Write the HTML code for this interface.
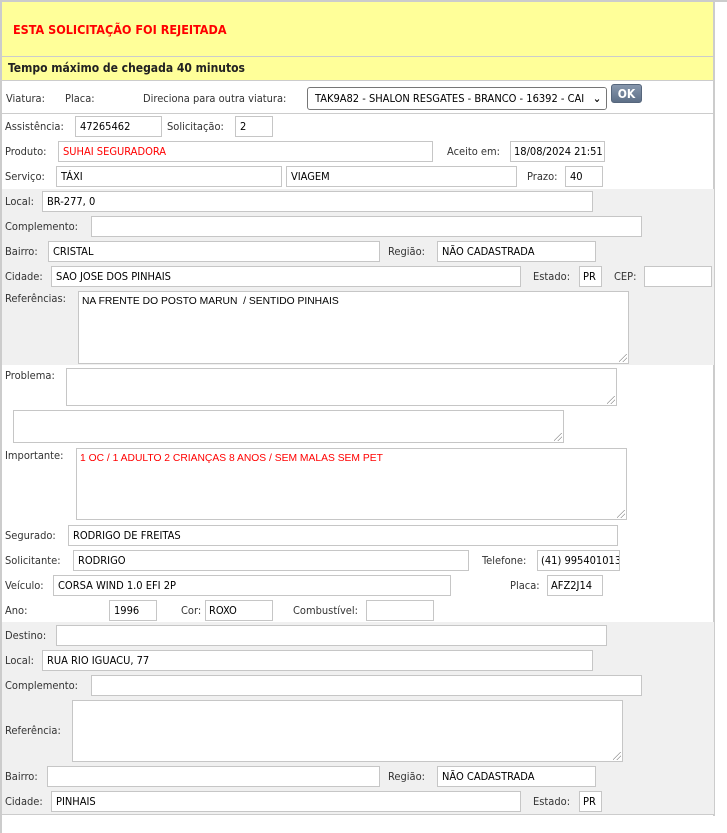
<!DOCTYPE html>
<html><head><meta charset="utf-8"><style>
*{box-sizing:border-box;margin:0;padding:0}
body{width:727px;height:833px;background:#fff;position:relative;overflow:hidden;font-family:"DejaVu Sans Condensed","Liberation Sans",sans-serif;font-size:11px;color:#333}
div,span{position:absolute}
.l{white-space:nowrap;line-height:13px;transform:translateY(-1px)}
.i{background:#fff;border:1px solid #c6c6c6;height:21px;line-height:19px;padding-left:4px;color:#000;white-space:nowrap;overflow:hidden}
.t{background:#fff;border:1px solid #c6c6c6;padding:4px 3px;color:#000;font-family:"Liberation Sans",sans-serif;font-size:10.3px;white-space:nowrap;overflow:hidden}
.t::after{content:"";position:absolute;right:1px;bottom:1px;width:8px;height:8px;background:linear-gradient(135deg,transparent 45%,#999 45%,#999 52%,transparent 52%,transparent 70%,#999 70%,#999 77%,transparent 77%)}
.g{background:#f0f0f0;left:2px;width:712px}
</style></head><body>
<div style="left:0;top:0;width:727px;height:2px;background:#ccc"></div>
<div style="left:0;top:0;width:2px;height:833px;background:#ccc"></div>
<div style="left:713px;top:0;width:2px;height:816px;background:#ccc"></div>
<div style="left:2px;top:2px;width:711px;height:54px;background:#ffff99"></div>
<div style="left:2px;top:56px;width:711px;height:1px;background:#ccc"></div>
<div style="left:2px;top:57px;width:711px;height:23px;background:#ffff99"></div>
<div style="left:2px;top:80px;width:711px;height:1px;background:#ccc"></div>
<div style="left:2px;top:113px;width:711px;height:1px;background:#ccc"></div>
<div class="l" style="left:13px;top:23px;color:#f00;font-weight:bold;font-size:12.5px;line-height:15px">ESTA SOLICITAÇÃO FOI REJEITADA</div>
<div class="l" style="left:8px;top:62px;font-weight:bold;color:#222;font-size:12px;line-height:15px">Tempo máximo de chegada 40 minutos</div>

<div class="l" style="left:6px;top:93px">Viatura:</div>
<div class="l" style="left:65px;top:93px">Placa:</div>
<div class="l" style="left:143px;top:93px">Direciona para outra viatura:</div>
<div style="left:307px;top:87px;width:300px;height:23px;border:1px solid #767676;border-radius:3px;background:#fff;color:#000;line-height:21px;padding-left:7px;white-space:nowrap;overflow:hidden">TAK9A82 - SHALON RESGATES - BRANCO - 16392 - CAI<span style="right:0;top:0;width:18px;height:21px;background:#fff;text-align:center;font-size:11px;font-weight:bold">&#8964;</span></div>
<div style="left:611px;top:84px;width:31px;height:19px;border-radius:3px;background:linear-gradient(#8797ad,#5d6f87);color:#fff;font-weight:bold;font-size:12px;text-align:center;line-height:18px;border:1px solid #56667c">OK</div>

<div class="l" style="left:5px;top:121px">Assistência:</div><div class="i" style="left:75px;top:116px;width:87px">47265462</div>
<div class="l" style="left:167px;top:121px">Solicitação:</div><div class="i" style="left:235px;top:116px;width:38px">2</div>
<div class="l" style="left:5px;top:146px">Produto:</div><div class="i" style="left:58px;top:141px;width:375px;color:#f00">SUHAI SEGURADORA</div>
<div class="l" style="left:447px;top:146px">Aceito em:</div><div class="i" style="left:510px;top:141px;width:95px;padding-left:3px">18/08/2024 21:51</div>
<div class="l" style="left:5px;top:171px">Serviço:</div><div class="i" style="left:56px;top:166px;width:226px">TÁXI</div>
<div class="i" style="left:286px;top:166px;width:231px">VIAGEM</div>
<div class="l" style="left:527px;top:171px">Prazo:</div><div class="i" style="left:565px;top:166px;width:38px">40</div>

<div class="g" style="top:189px;height:176px"></div>
<div class="l" style="left:5px;top:196px">Local:</div><div class="i" style="left:42px;top:191px;width:551px">BR-277, 0</div>
<div class="l" style="left:5px;top:221px">Complemento:</div><div class="i" style="left:91px;top:216px;width:551px"></div>
<div class="l" style="left:5px;top:246px">Bairro:</div><div class="i" style="left:48px;top:241px;width:332px">CRISTAL</div>
<div class="l" style="left:388px;top:246px">Região:</div><div class="i" style="left:437px;top:241px;width:159px">NÃO CADASTRADA</div>
<div class="l" style="left:5px;top:271px">Cidade:</div><div class="i" style="left:51px;top:266px;width:470px">SAO JOSE DOS PINHAIS</div>
<div class="l" style="left:533px;top:271px">Estado:</div><div class="i" style="left:579px;top:266px;width:23px;padding-left:3px">PR</div>
<div class="l" style="left:614px;top:271px">CEP:</div><div class="i" style="left:644px;top:266px;width:68px"></div>
<div class="l" style="left:5px;top:293px">Referências:</div><div class="t" style="left:78px;top:291px;width:551px;height:73px">NA FRENTE DO POSTO MARUN &nbsp;/ SENTIDO PINHAIS</div>

<div class="l" style="left:5px;top:370px">Problema:</div><div class="t" style="left:66px;top:368px;width:551px;height:38px"></div>
<div class="t" style="left:13px;top:410px;width:551px;height:33px"></div>
<div class="l" style="left:5px;top:450px">Importante:</div><div class="t" style="left:76px;top:448px;width:551px;height:72px;color:#f00">1 OC / 1 ADULTO 2 CRIANÇAS 8 ANOS / SEM MALAS SEM PET</div>

<div class="l" style="left:5px;top:530px">Segurado:</div><div class="i" style="left:68px;top:525px;width:550px">RODRIGO DE FREITAS</div>
<div class="l" style="left:5px;top:555px">Solicitante:</div><div class="i" style="left:73px;top:550px;width:396px">RODRIGO</div>
<div class="l" style="left:482px;top:555px">Telefone:</div><div class="i" style="left:537px;top:550px;width:83px;padding-left:3px">(41) 995401013</div>
<div class="l" style="left:5px;top:580px">Veículo:</div><div class="i" style="left:53px;top:575px;width:398px">CORSA WIND 1.0 EFI 2P</div>
<div class="l" style="left:510px;top:580px">Placa:</div><div class="i" style="left:547px;top:575px;width:56px;padding-left:3px">AFZ2J14</div>
<div class="l" style="left:5px;top:605px">Ano:</div><div class="i" style="left:109px;top:600px;width:48px">1996</div>
<div class="l" style="left:181px;top:605px">Cor:</div><div class="i" style="left:205px;top:600px;width:68px;padding-left:3px">ROXO</div>
<div class="l" style="left:293px;top:605px">Combustível:</div><div class="i" style="left:366px;top:600px;width:68px"></div>

<div class="g" style="top:622px;height:192px"></div>
<div style="left:2px;top:814px;width:712px;height:1px;background:#ccc"></div>
<div class="l" style="left:5px;top:630px">Destino:</div><div class="i" style="left:56px;top:625px;width:551px"></div>
<div class="l" style="left:5px;top:655px">Local:</div><div class="i" style="left:42px;top:650px;width:551px">RUA RIO IGUACU, 77</div>
<div class="l" style="left:5px;top:680px">Complemento:</div><div class="i" style="left:91px;top:675px;width:551px"></div>
<div class="l" style="left:5px;top:725px">Referência:</div><div class="t" style="left:72px;top:700px;width:551px;height:62px"></div>
<div class="l" style="left:5px;top:771px">Bairro:</div><div class="i" style="left:47px;top:766px;width:333px"></div>
<div class="l" style="left:388px;top:771px">Região:</div><div class="i" style="left:437px;top:766px;width:159px">NÃO CADASTRADA</div>
<div class="l" style="left:5px;top:796px">Cidade:</div><div class="i" style="left:51px;top:791px;width:470px">PINHAIS</div>
<div class="l" style="left:533px;top:796px">Estado:</div><div class="i" style="left:579px;top:791px;width:23px;padding-left:3px">PR</div>
</body></html>
